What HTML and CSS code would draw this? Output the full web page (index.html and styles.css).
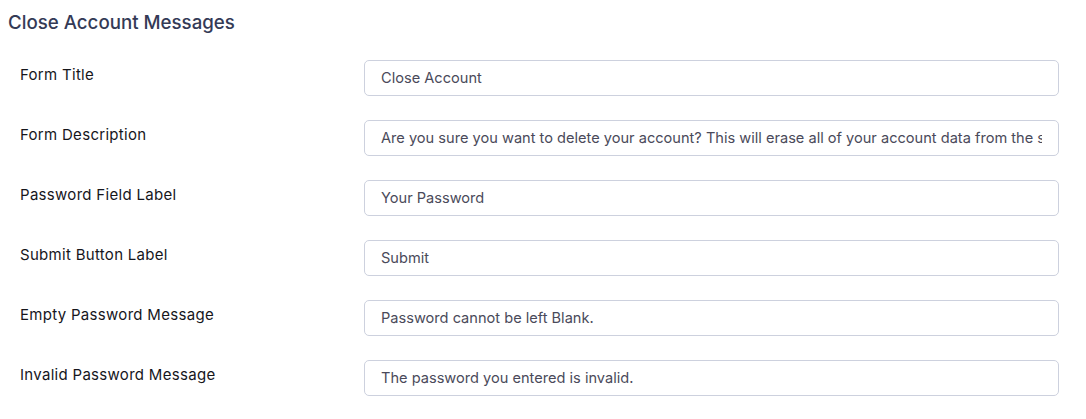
FILE: index.html
```html
<!DOCTYPE html>
<html>
<head>
<meta charset="utf-8">
<link rel="stylesheet" href="styles.css">
</head>
<body>
<div class="page">
  <h2 class="title">Close Account Messages</h2>
  <div class="rows">
    <div class="row">
      <label class="label">Form Title</label>
      <input class="field" type="text" value="Close Account">
    </div>
    <div class="row">
      <label class="label">Form Description</label>
      <input class="field" type="text" value="Are you sure you want to delete your account? This will erase all of your account data from the site. To delete your account enter your password below.">
    </div>
    <div class="row">
      <label class="label">Password Field Label</label>
      <input class="field" type="text" value="Your Password">
    </div>
    <div class="row">
      <label class="label">Submit Button Label</label>
      <input class="field" type="text" value="Submit">
    </div>
    <div class="row">
      <label class="label">Empty Password Message</label>
      <input class="field" type="text" value="Password cannot be left Blank.">
    </div>
    <div class="row">
      <label class="label">Invalid Password Message</label>
      <input class="field" type="text" value="The password you entered is invalid.">
    </div>
  </div>
</div>
</body>
</html>
```
FILE: styles.css
```css
html, body {
  margin: 0;
  padding: 0;
  background: #ffffff;
}
body {
  font-family: Inter, "Open Sans", "Liberation Sans", sans-serif;
}
.page {
  padding: 10px 27px 0 8px;
}
.title {
  margin: 0;
  font-size: 18.7px;
  font-weight: 500;
  color: #343a56;
  line-height: 26px;
}
.rows {
  display: flex;
  flex-direction: column;
  gap: 24px;
  margin-top: 24px;
}
.row {
  display: grid;
  grid-template-columns: 344px 1fr;
  padding-left: 12px;
  align-items: start;
}
.label {
  font-size: 15px;
  font-weight: 400;
  letter-spacing: 0.3px;
  color: #16161c;
  line-height: 20px;
  padding-top: 5px;
}
.field {
  box-sizing: border-box;
  height: 36px;
  width: 100%;
  border: 1px solid #cdd1de;
  border-radius: 5px;
  padding: 0 16px;
  font-family: inherit;
  font-size: 14.6px;
  color: #4a4a5a;
  background: #fff;
  outline: none;
}
```
